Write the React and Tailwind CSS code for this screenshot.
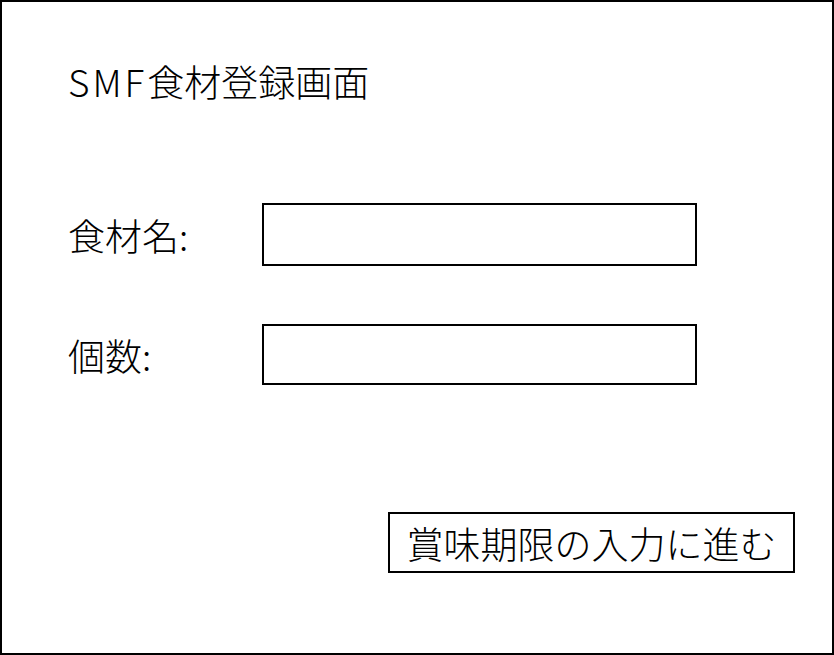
export default function App() {
  const font = { fontFamily: '"Noto Sans CJK JP", "Noto Sans", sans-serif' }
  return (
    <div className="w-[834px] h-[655px] bg-white border-2 border-black pl-[66px] pt-[59px] font-light text-black" style={font}>
      <h1 className="text-[37px] leading-[40px] font-light">
        <span className="tracking-[3px]">SMF</span>食材登録画面
      </h1>
      <div className="mt-[102px] flex flex-col gap-[58px]">
        <div className="flex items-center">
          <label className="w-[194px] text-[37px] leading-[40px]">食材名:</label>
          <input type="text" className="w-[435px] h-[63px] border-2 border-black outline-none px-2" />
        </div>
        <div className="flex items-center">
          <label className="w-[194px] text-[37px] leading-[40px]">個数:</label>
          <input type="text" className="w-[435px] h-[61px] border-2 border-black outline-none px-2" />
        </div>
      </div>
      <div className="mt-[127px] pl-[320px]">
        <button className="w-[407px] h-[61px] border-2 border-black text-[37px] leading-[40px] font-light">
          賞味期限の入力に進む
        </button>
      </div>
    </div>
  )
}
